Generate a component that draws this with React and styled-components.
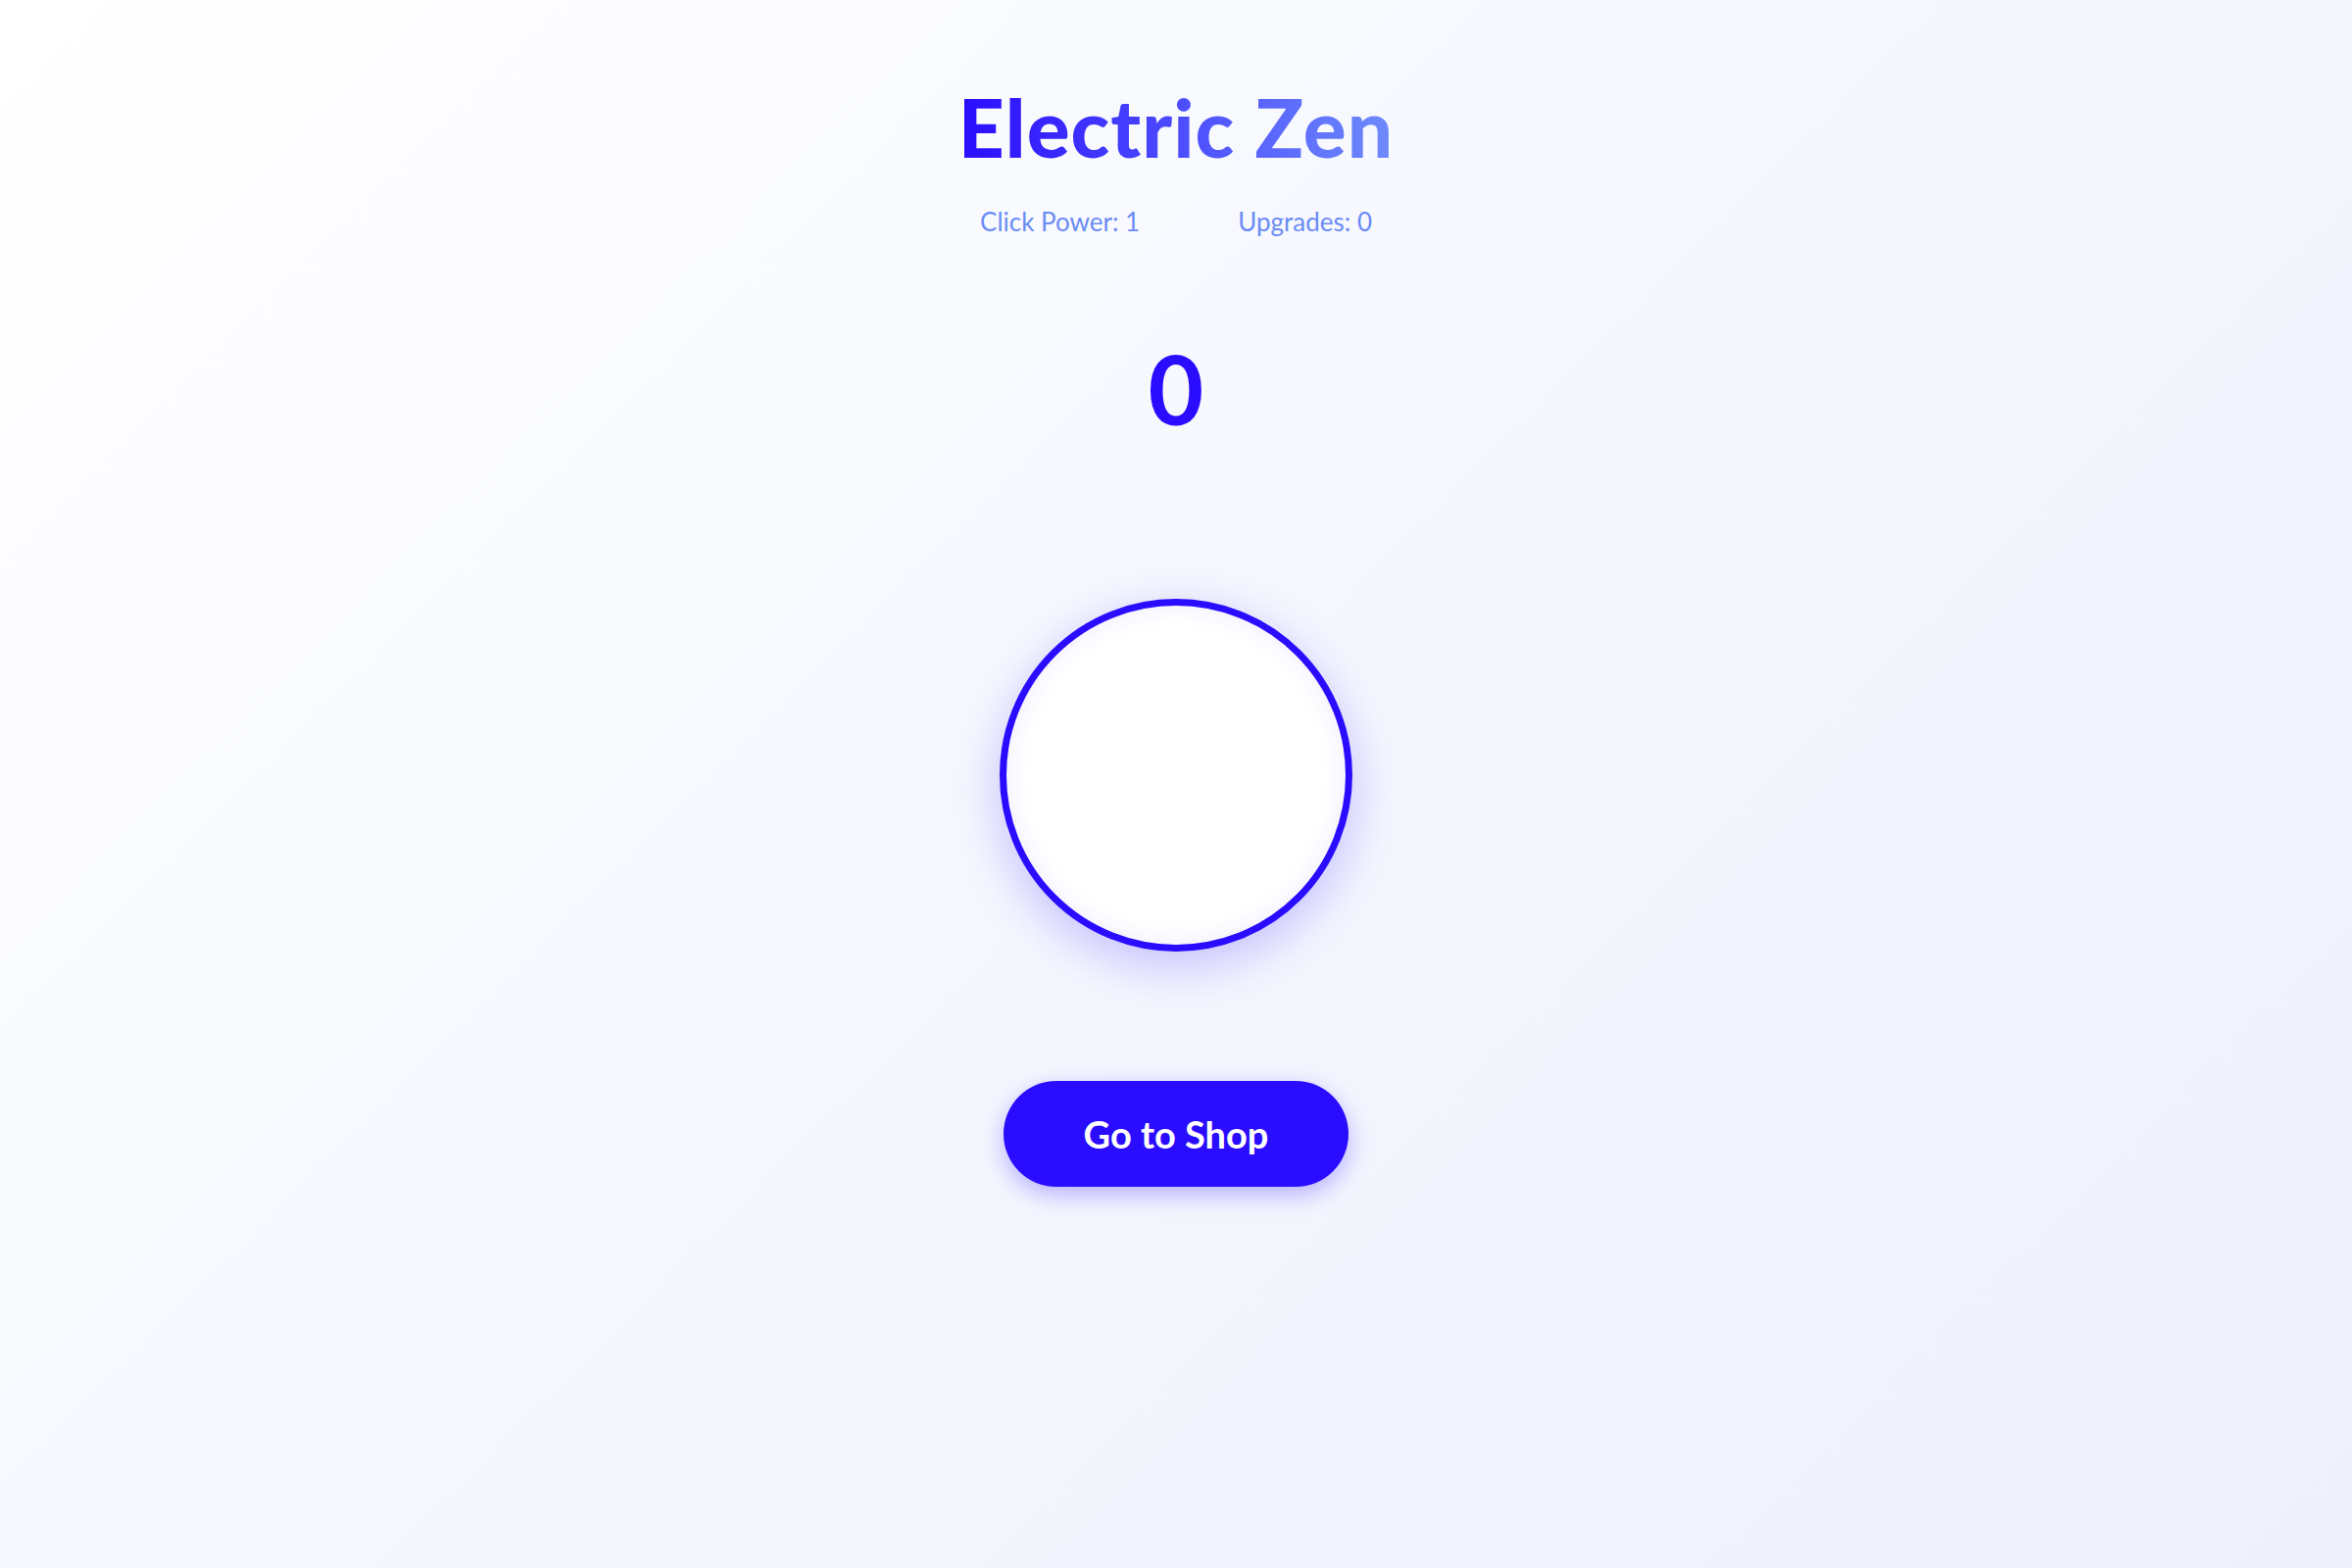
import styled, { createGlobalStyle } from "styled-components";

const GlobalStyle = createGlobalStyle`
  html, body {
    margin: 0;
    padding: 0;
  }
  body {
    min-height: 100vh;
    background: linear-gradient(135deg, #ffffff 0%, #f5f7fe 50%, #eef1fd 100%);
    font-family: "Lato", "Inter", sans-serif;
  }
`;

const Page = styled.main`
  min-height: 100vh;
  display: flex;
  flex-direction: column;
  align-items: center;
  padding-top: 88px;
  box-sizing: border-box;
`;

const Title = styled.h1`
  margin: 0;
  font-size: 82px;
  line-height: 1;
  font-weight: 900;
  letter-spacing: 1px;
  background: linear-gradient(90deg, #2a0cff 0%, #6e8bfb 100%);
  -webkit-background-clip: text;
  background-clip: text;
  color: transparent;
`;

const Stats = styled.div`
  display: flex;
  gap: 100px;
  margin-top: 40px;
`;

const Stat = styled.span`
  font-size: 26px;
  color: #6b8cf5;
`;

const Counter = styled.div`
  margin-top: 105px;
  font-size: 98px;
  font-weight: 700;
  line-height: 1;
  color: #2a0cff;
`;

const Orb = styled.button`
  margin-top: 166px;
  width: 360px;
  height: 360px;
  border-radius: 50%;
  border: 7px solid #2a0cff;
  background: #ffffff;
  box-sizing: border-box;
  cursor: pointer;
  box-shadow: 0 14px 50px rgba(42, 12, 255, 0.24),
    inset 0 0 26px rgba(42, 12, 255, 0.08);
`;

const ShopButton = styled.button`
  margin-top: 132px;
  width: 352px;
  height: 108px;
  border: none;
  border-radius: 54px;
  background: #2a0cff;
  color: #ffffff;
  font-family: "Lato", "Inter", sans-serif;
  font-size: 38px;
  font-weight: 700;
  cursor: pointer;
  box-shadow: 0 8px 24px rgba(42, 12, 255, 0.3);
`;

export default function App() {
  return (
    <>
      <GlobalStyle />
      <Page>
        <Title>Electric Zen</Title>
        <Stats>
          <Stat>Click Power: 1</Stat>
          <Stat>Upgrades: 0</Stat>
        </Stats>
        <Counter>0</Counter>
        <Orb aria-label="Click" />
        <ShopButton>Go to Shop</ShopButton>
      </Page>
    </>
  );
}
